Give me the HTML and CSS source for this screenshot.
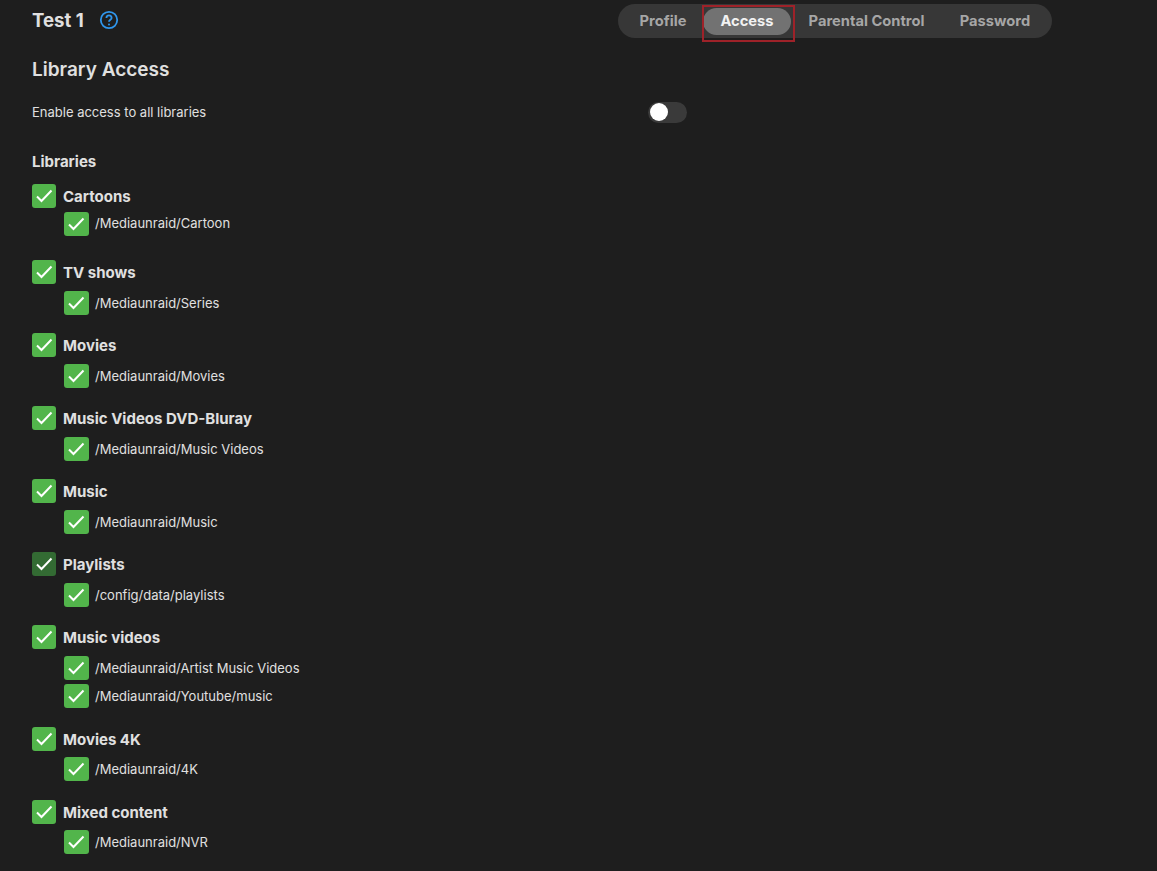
FILE: index.html
```html
<!DOCTYPE html>
<html lang="en">
  <head>
    <meta charset="UTF-8" />
    <title>Test 1 - Access</title>
    <link rel="stylesheet" href="styles.css">
  </head>
  <body>
    <div class="page">
      <!-- Header -->
      <div class="header">
        <div class="user-title">
          <span class="user-name">Test 1</span>
          <svg class="help-icon" viewBox="0 0 20 20">
            <circle cx="10" cy="10" r="8.2" />
            <path d="M7.4 7.9a2.6 2.6 0 0 1 5.2 0c0 1.8-2.6 2-2.6 3.9" />
            <circle class="help-dot" cx="10" cy="14.4" r="1" />
          </svg>
        </div>
        <div class="tabs">
          <div class="tab tab-profile">Profile</div>
          <div class="tab tab-active">Access<span class="highlight"></span></div>
          <div class="tab tab-parental">Parental Control</div>
          <div class="tab tab-password">Password</div>
        </div>
      </div>

      <h2 class="section-title">Library Access</h2>

      <div class="toggle-row">
        <span>Enable access to all libraries</span>
        <div class="toggle"><div class="toggle-knob"></div></div>
      </div>

      <div class="libraries-label">Libraries</div>

      <div class="library library-first">
        <div class="library-row">
          <span class="check"><svg viewBox="0 0 24 24"><path d="M5 12.5l4.500 4.500L19.500 6.500" /></svg></span>
          <span>Cartoons</span>
        </div>
        <div class="folder-row">
          <span class="check check-folder"><svg viewBox="0 0 24 24"><path d="M5 12.5l4.500 4.500L19.500 6.500" /></svg></span>
          <span>/Mediaunraid/Cartoon</span>
        </div>
      </div>

      <div class="library">
        <div class="library-row">
          <span class="check"><svg viewBox="0 0 24 24"><path d="M5 12.5l4.500 4.500L19.500 6.500" /></svg></span>
          <span>TV shows</span>
        </div>
        <div class="folder-row">
          <span class="check check-folder"><svg viewBox="0 0 24 24"><path d="M5 12.5l4.500 4.500L19.500 6.500" /></svg></span>
          <span>/Mediaunraid/Series</span>
        </div>
      </div>

      <div class="library">
        <div class="library-row">
          <span class="check"><svg viewBox="0 0 24 24"><path d="M5 12.5l4.500 4.500L19.500 6.500" /></svg></span>
          <span>Movies</span>
        </div>
        <div class="folder-row">
          <span class="check check-folder"><svg viewBox="0 0 24 24"><path d="M5 12.5l4.500 4.500L19.500 6.500" /></svg></span>
          <span>/Mediaunraid/Movies</span>
        </div>
      </div>

      <div class="library">
        <div class="library-row">
          <span class="check"><svg viewBox="0 0 24 24"><path d="M5 12.5l4.500 4.500L19.500 6.500" /></svg></span>
          <span>Music Videos DVD-Bluray</span>
        </div>
        <div class="folder-row">
          <span class="check check-folder"><svg viewBox="0 0 24 24"><path d="M5 12.5l4.500 4.500L19.500 6.500" /></svg></span>
          <span>/Mediaunraid/Music Videos</span>
        </div>
      </div>

      <div class="library">
        <div class="library-row">
          <span class="check"><svg viewBox="0 0 24 24"><path d="M5 12.5l4.500 4.500L19.500 6.500" /></svg></span>
          <span>Music</span>
        </div>
        <div class="folder-row">
          <span class="check check-folder"><svg viewBox="0 0 24 24"><path d="M5 12.5l4.500 4.500L19.500 6.500" /></svg></span>
          <span>/Mediaunraid/Music</span>
        </div>
      </div>

      <div class="library">
        <div class="library-row">
          <span class="check check-dim"><svg viewBox="0 0 24 24"><path d="M5 12.5l4.500 4.500L19.500 6.500" /></svg></span>
          <span>Playlists</span>
        </div>
        <div class="folder-row">
          <span class="check check-folder"><svg viewBox="0 0 24 24"><path d="M5 12.5l4.500 4.500L19.500 6.500" /></svg></span>
          <span>/config/data/playlists</span>
        </div>
      </div>

      <div class="library">
        <div class="library-row">
          <span class="check"><svg viewBox="0 0 24 24"><path d="M5 12.5l4.500 4.500L19.500 6.500" /></svg></span>
          <span>Music videos</span>
        </div>
        <div class="folder-row">
          <span class="check check-folder"><svg viewBox="0 0 24 24"><path d="M5 12.5l4.500 4.500L19.500 6.500" /></svg></span>
          <span>/Mediaunraid/Artist Music Videos</span>
        </div>
        <div class="folder-row folder-row-next">
          <span class="check check-folder"><svg viewBox="0 0 24 24"><path d="M5 12.5l4.500 4.500L19.500 6.500" /></svg></span>
          <span>/Mediaunraid/Youtube/music</span>
        </div>
      </div>

      <div class="library library-tight">
        <div class="library-row">
          <span class="check"><svg viewBox="0 0 24 24"><path d="M5 12.5l4.500 4.500L19.500 6.500" /></svg></span>
          <span>Movies 4K</span>
        </div>
        <div class="folder-row">
          <span class="check check-folder"><svg viewBox="0 0 24 24"><path d="M5 12.5l4.500 4.500L19.500 6.500" /></svg></span>
          <span>/Mediaunraid/4K</span>
        </div>
      </div>

      <div class="library library-tight">
        <div class="library-row">
          <span class="check"><svg viewBox="0 0 24 24"><path d="M5 12.5l4.500 4.500L19.500 6.500" /></svg></span>
          <span>Mixed content</span>
        </div>
        <div class="folder-row">
          <span class="check check-folder"><svg viewBox="0 0 24 24"><path d="M5 12.5l4.500 4.500L19.500 6.500" /></svg></span>
          <span>/Mediaunraid/NVR</span>
        </div>
      </div>
    </div>
  </body>
</html>
```

FILE: styles.css
```css
/* Reset & Global Styles */
* {
  box-sizing: border-box;
  margin: 0;
  padding: 0;
}
html,
body {
  height: 871px;
  overflow: hidden;
}
body {
  background: #1e1e1e;
  color: #e0e0e0;
  font-family: Inter, "Noto Sans", sans-serif;
}
.page {
  padding: 4px 0 0 32px;
}

/* Header */
.header {
  display: flex;
  align-items: center;
  height: 34px;
}
.user-title {
  display: flex;
  align-items: center;
  gap: 15px;
  width: 586px;
  margin-bottom: 2px;
}
.user-name {
  font-size: 18.6px;
  font-weight: 700;
}
.help-icon {
  width: 20px;
  height: 20px;
  fill: none;
  stroke: #2f96ec;
  stroke-width: 1.8;
}
.help-dot {
  fill: #2f96ec;
  stroke: none;
}

/* Tabs */
.tabs {
  display: flex;
  align-items: center;
  width: 434px;
  height: 34px;
  padding: 0 3px;
  border-radius: 17px;
  background: #373737;
}
.tab {
  position: relative;
  display: flex;
  justify-content: center;
  align-items: center;
  height: 27px;
  padding-bottom: 1px;
  border-radius: 14px;
  color: #a6a6a6;
  font-size: 14.7px;
  font-weight: 700;
}
.tab-profile {
  width: 82px;
  padding-left: 2px;
}
.tab-active {
  width: 88px;
  background: #727272;
  color: #f2f2f2;
}
.tab-parental {
  width: 151px;
}
.tab-password {
  width: 88px;
  margin-left: 9px;
}
.highlight {
  position: absolute;
  top: -3px;
  left: -1px;
  width: 93px;
  height: 37px;
  border: 2px solid #9e2229;
}

/* Library Access */
.section-title {
  margin-top: 20px;
  font-size: 19px;
  font-weight: 600;
  line-height: 24px;
}
.toggle-row {
  display: flex;
  justify-content: space-between;
  align-items: center;
  width: 655px;
  height: 22px;
  margin-top: 19px;
  font-size: 13px;
}
.toggle {
  display: flex;
  align-items: center;
  width: 39px;
  height: 21px;
  padding: 0 2px;
  border-radius: 11px;
  background: #3a3a3a;
}
.toggle-knob {
  width: 18px;
  height: 18px;
  border-radius: 50%;
  background: #fff;
}
.libraries-label {
  height: 20px;
  margin-top: 29px;
  font-size: 15px;
  font-weight: 700;
  line-height: 20px;
}

/* Library list */
.library {
  margin-top: 16px;
}
.library-first {
  margin-top: 12px;
  margin-bottom: 22px;
}
.library-tight {
  padding-bottom: 1px;
}
.library-row {
  display: flex;
  align-items: center;
  gap: 7px;
  height: 24px;
  font-size: 15px;
  font-weight: 700;
}
.folder-row {
  display: flex;
  align-items: center;
  gap: 6px;
  height: 28px;
  margin-top: 5px;
  margin-left: 32px;
  font-size: 13px;
}
.library-first .folder-row {
  margin-top: 2px;
}
.library-first .folder-row span:last-child {
  margin-bottom: 2px;
}
.library-tight .folder-row {
  margin-top: 4px;
}
.folder-row-next {
  margin-top: 0;
  margin-bottom: 17px;
}
.check {
  display: flex;
  width: 24px;
  height: 24px;
  border-radius: 3px;
  background: #52b54b;
}
.check-folder {
  width: 25px;
}
.check-dim {
  background: #336b33;
}
.check svg {
  width: 24px;
  height: 24px;
  fill: none;
  stroke: #fff;
  stroke-width: 2;
}
```
